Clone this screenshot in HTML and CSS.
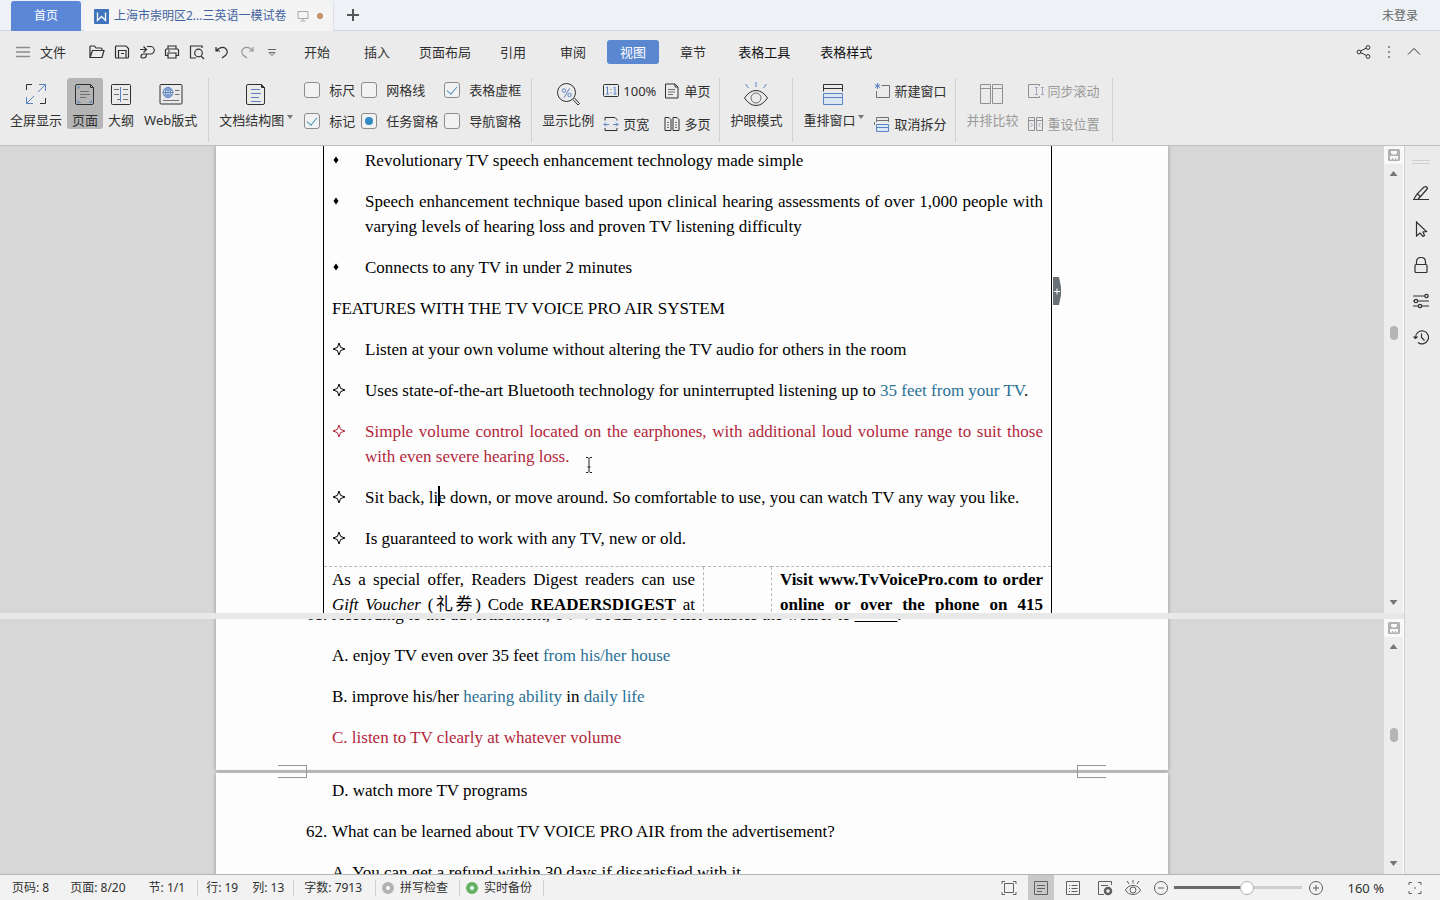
FILE: index.html
```html
<!DOCTYPE html>
<html lang="zh-CN">
<head>
<meta charset="utf-8">
<title>上海市崇明区2…三英语一模试卷</title>
<link rel="stylesheet" href="styles.css">
</head>
<body>
<svg class="defs" aria-hidden="true">
  <symbol id="star" viewBox="0 0 14 14"><path d="M7 1 L8.6 5.4 L13 7 L8.6 8.6 L7 13 L5.4 8.6 L1 7 L5.4 5.4 Z"/></symbol>
  <symbol id="diamond" viewBox="0 0 14 14"><path d="M4 2.500 L6.500 6 L4 9.500 L1.500 6 Z"/></symbol>
  <symbol id="split" viewBox="0 0 12 12"><path fill="#b0b0b0" stroke="none" fill-rule="evenodd" d="M1.500 0h9q1.500 0 1.500 1.500v9q0 1.500-1.500 1.500h-9Q0 12 0 10.500v-9Q0 0 1.500 0zM3 2v1.500q0 2 2 2h2q2 0 2-2V2zM2 7v3.500h2V9h1v1.500h2V9h1v1.500h2V7z"/></symbol>
</svg>

<header class="titlebar">
  <button class="home-tab">首页</button>
  <div class="doc-tab">
    <svg class="logo" viewBox="0 0 15 15" width="15" height="15"><rect width="15" height="15" rx="1" fill="#3f74bd" stroke="none"/><path d="M3.500 3.500v8l4-4 4 4v-8" fill="none" stroke="#fff" stroke-width="1.300"/></svg>
    <span class="doc-name">上海市崇明区2...三英语一模试卷</span>
    <svg class="screen" viewBox="0 0 12 12" width="12" height="12"><path d="M1 1.500h10v7H1zM6 8.500v2M3.500 11h5"/></svg>
    <i class="dot"></i>
  </div>
  <button class="new-tab" aria-label="新建标签"><svg viewBox="0 0 12 12" width="12" height="12"><path d="M6 0v12M0 6h12"/></svg></button>
  <button class="login">未登录</button>
</header>

<nav class="menubar">
  <button class="file"><svg viewBox="0 0 14 12" width="14" height="12"><path d="M0 1.500h14M0 6h14M0 10.500h14" stroke="#8c8c8c" stroke-width="1.400"/></svg>文件</button>
  <div class="quick">
    <button aria-label="打开"><svg viewBox="0 0 16 16"><path d="M1 13V3q0-1 1-1h3.500l1.500 2h5q1 0 1 1v1.500M1 13.500l2.500-7H15l-2 7z"/></svg></button>
    <button aria-label="保存"><svg viewBox="0 0 16 16"><path d="M1.500 3q0-1 1-1H12l2.500 2.500V13q0 1-1 1h-11q-1 0-1-1zM5 2h6M4.500 14V6.500h7.500V14M7 9.500h3"/></svg></button>
    <button aria-label="输出"><svg viewBox="0 0 16 16"><path d="M1 5.500h6M4.500 2.500l3 3-3 3M8 2.500h3.500a3.700 3.700 0 0 1 0 7.500H7.500q0 4-3 4T2 12t2.500-2H8"/></svg></button>
    <button aria-label="打印"><svg viewBox="0 0 16 16"><path d="M4 5V2h8v3M4 11.500H1.500V6q0-1 1-1h11q1 0 1 1v5.500H12M4 9h8v5H4zM4 7h2"/></svg></button>
    <button aria-label="打印预览"><svg viewBox="0 0 16 16"><path d="M7 14H1.500V2H13v2M12 12l3 3"/><circle cx="9.500" cy="9" r="3.800"/></svg></button>
    <button aria-label="撤销"><svg viewBox="0 0 16 16"><path d="M2 3v4h4M2 7q5-5 9-3 4 3 1 7l-4 3"/></svg></button>
    <button class="faded" aria-label="恢复"><svg viewBox="0 0 16 16"><path d="M14 3v4h-4M14 7q-4-5-9-3-4 3-1 7l4 3"/></svg></button>
    <button aria-label="更多"><svg class="thin" viewBox="0 0 16 16"><path d="M4 5.500h8M5 8.500h6l-3 3z"/></svg></button>
  </div>
  <div class="tabs">
    <button>开始</button><button>插入</button><button class="wide">页面布局</button><button>引用</button><button>审阅</button><button class="active">视图</button><button>章节</button><button class="ctx">表格工具</button><button class="ctx">表格样式</button>
  </div>
  <div class="menu-right">
    <button aria-label="分享"><svg viewBox="0 0 16 16"><path d="M4.500 7l6-3M4.500 8.500l6 3"/><circle cx="3" cy="8" r="1.900"/><circle cx="12" cy="3.500" r="1.900"/><circle cx="12" cy="12.500" r="1.900"/></svg></button>
    <button aria-label="菜单"><svg viewBox="0 0 16 16"><path d="M8 2v2M8 7v2M8 12v2"/></svg></button>
    <button aria-label="收起"><svg viewBox="0 0 16 16"><path d="M2 10.500l6-6 6 6"/></svg></button>
  </div>
</nav>

<section class="ribbon">
  <div class="group">
    <button class="big"><svg viewBox="0 0 24 24"><path d="M2.500 8V2.500H8M21.500 16v5.500H16"/><path class="b" d="M14 10l7.500-7.500M15 2.500h6.500V9M10 14l-7.500 7.500M2.500 15v6.500H9"/></svg><span>全屏显示</span></button>
    <button class="big pressed"><svg viewBox="0 0 24 24"><path d="M4 2.500h13.500l3 3V21q0 1.500-1.500 1.500H4q-1.500 0-1.500-1.500V4Q2.500 2.500 4 2.500zM17.500 2.500v3h3"/><path class="g" d="M7 9.500h9M7 12.500h10M7 15.500h6"/><path class="b" d="M5 7V5H7M5 18v2.500H7.500M18.500 18v2.500H16"/></svg><span>页面</span></button>
    <button class="big"><svg viewBox="0 0 24 24"><rect x="2.500" y="2.500" width="19" height="20" rx="1"/><path class="g" d="M5 7.500h5M5 12.500h5M8 17.500h3M14 7.500h5M14 12.500h5M14 17.500h5"/><path class="b" d="M11.500 5v15"/></svg><span>大纲</span></button>
    <button class="big"><svg viewBox="0 0 24 24"><rect x="1" y="2.500" width="22" height="19.500" rx="1"/><circle class="b" cx="9" cy="10.500" r="5"/><path class="b" d="M4 10.500h10M9 5.500v10M5 8h8M5 13h8"/><ellipse class="b" cx="9" cy="10.500" rx="2.500" ry="5"/><path class="g" d="M16 8.500h4.500M16 12.500h4.500M4 18.500h16"/></svg><span>Web版式</span></button>
  </div>
  <div class="group checks-group">
    <button class="big drop"><svg viewBox="0 0 24 24"><path d="M4 2.500h13.500l3 3V21q0 1.500-1.500 1.500H4q-1.500 0-1.500-1.500V4Q2.500 2.500 4 2.500z"/><path d="M17.500 2.500v3h3z" fill="#3c3c3c"/><path class="b" d="M7 7.500h9M7 11.500h10M7 15.500h8M7 19.500h10"/></svg><span>文档结构图</span></button>
    <div class="checks">
      <label><input type="checkbox">标尺</label>
      <label><input type="checkbox">网格线</label>
      <label><input type="checkbox" checked>表格虚框</label>
      <label><input type="checkbox" checked>标记</label>
      <label><input type="checkbox" class="partial">任务窗格</label>
      <label><input type="checkbox">导航窗格</label>
    </div>
  </div>
  <div class="group">
    <button class="big"><svg viewBox="0 0 24 24"><circle cx="10.500" cy="10.500" r="9"/><path d="M17 17.500l5 5.500 1.500-1.500-5-5.500"/><circle class="b" cx="8" cy="8.500" r="1.700"/><circle class="b" cx="13.500" cy="13" r="1.700"/><path class="b" d="M13.500 6.500l-5.500 9"/></svg><span>显示比例</span></button>
    <div class="pairs two">
      <button class="small"><svg viewBox="0 0 16 16"><rect x=".5" y="1.500" width="15" height="12" rx="1"/><path class="b" d="M3 5l1.500-1v7M3 11h3M10.500 5l1.500-1v7M10.500 11h3M8 6v1M8 9v1"/></svg>100%</button>
      <button class="small"><svg viewBox="0 0 16 16"><path d="M1.500 1h9.500l3 3v11H1.500zM11 1v3h3"/><path class="g" d="M4 6.500h7M4 9h7M4 11.500h5"/></svg>单页</button>
      <button class="small"><svg viewBox="0 0 16 16"><path d="M2 4.500V1.500h10l2 2v1M2 12v2.500h12V12"/><path class="b" d="M6 8.500H1M3 6.500l-2 2 2 2M10 8.500h5M13 6.500l2 2-2 2"/></svg>页宽</button>
      <button class="small"><svg viewBox="0 0 16 16"><path d="M1 1.500h4l2 2v11H1zM9 1.500h4l2 2v11H9z"/><path class="g" d="M3 6.500h2M3 9h2M3 11.500h2M11 6.500h2M11 9h2M11 11.500h2"/></svg>多页</button>
    </div>
  </div>
  <div class="group">
    <button class="big"><svg viewBox="0 0 24 24"><path d="M0.500 16q5-7.500 11.500-7.500T23.500 16q-5 7.500-11.500 7.500T.5 16z"/><circle class="g" cx="12" cy="16" r="5"/><path class="b" d="M12 0v5M1.500 2l3 4M22.500 2l-3 4"/></svg><span>护眼模式</span></button>
  </div>
  <div class="group">
    <button class="big drop"><svg viewBox="0 0 24 24"><path d="M2.500 9.500V2.500h19v7M2.500 6.500h19"/><path class="b f" d="M2.500 11.500h19v11h-19zM2.500 15.500h19"/></svg><span>重排窗口</span></button>
    <div class="pairs">
      <button class="small"><svg viewBox="0 0 16 16"><path class="g" d="M7.500 2.500h8v12h-13V8"/><path class="b" d="M3.500 0v6M1 1.500l5 3M6 1.500l-5 3"/></svg>新建窗口</button>
      <button class="small"><svg viewBox="0 0 16 16"><path class="g" d="M2.500 6V1.500h12V6M2.500 4.500h12M.5 6v3"/><path class="b f" d="M2.500 8.500h12v7h-12zM2.500 11.500h12"/></svg>取消拆分</button>
    </div>
  </div>
  <div class="group off">
    <button class="big" disabled><svg viewBox="0 0 24 24"><path d="M.5 2.500h10v19h-10zM12.500 2.500h10v19h-10zM.5 6.500h10M12.500 6.500h10"/></svg><span>并排比较</span></button>
    <div class="pairs">
      <button class="small" disabled><svg viewBox="0 0 16 16"><path d="M11.500 3V1.500H.5v13h11V13"/><path class="b" d="M7 4.500h3M7 11.500h3M8.500 4.500v7M13 4.500h3M13 11.500h3M14.500 4.500v7"/></svg>同步滚动</button>
      <button class="small" disabled><svg viewBox="0 0 16 16"><path d="M.5 1.500h6v13h-6zM8.500 1.500h6v13h-6zM.5 4.500h6M8.500 4.500h6"/><path class="b" d="M2.500 7l2 2-2 2M12.500 7l-2 2 2 2"/></svg>重设位置</button>
    </div>
  </div>
</section>

<main class="workspace">
  <div class="panes">
    <section class="pane pane-top">
      <div class="desk">
        <article class="page page-table">
          <table>
            <colgroup><col class="col-a"><col class="col-b"><col></colgroup>
            <tbody>
            <tr><td colspan="3" class="main-cell">
              <ul>
                <li><svg class="mark solid"><use href="#diamond"/></svg>Revolutionary TV speech enhancement technology made simple</li>
                <li><svg class="mark solid"><use href="#diamond"/></svg>Speech enhancement technique based upon clinical hearing assessments of over 1,000 people with varying levels of hearing loss and proven TV listening difficulty</li>
                <li><svg class="mark solid"><use href="#diamond"/></svg>Connects to any TV in under 2 minutes</li>
              </ul>
              <p>FEATURES WITH THE TV VOICE PRO AIR SYSTEM</p>
              <ul>
                <li><svg class="mark"><use href="#star"/></svg>Listen at your own volume without altering the TV audio for others in the room</li>
                <li><svg class="mark"><use href="#star"/></svg>Uses state-of-the-art Bluetooth technology for uninterrupted listening up to <span class="blue">35 feet from your TV</span>.</li>
                <li class="red"><svg class="mark"><use href="#star"/></svg>Simple volume control located on the earphones, with additional loud volume range to suit those with even severe hearing loss.</li>
                <li><svg class="mark"><use href="#star"/></svg>Sit back, li<i class="caret"></i>e down, or move around. So comfortable to use, you can watch TV any way you like.</li>
                <li><svg class="mark"><use href="#star"/></svg>Is guaranteed to work with any TV, new or old.</li>
              </ul>
            </td></tr>
            <tr class="offer">
              <td>As a special offer, Readers Digest readers can use<br><em>Gift Voucher</em> (礼券) Code <b>READERSDIGEST</b> at</td>
              <td></td>
              <td><b>Visit www.TvVoicePro.com to order<br>online or over the phone on 415</b></td>
            </tr>
            </tbody>
          </table>
          <button class="add-col" aria-label="添加列"><svg viewBox="0 0 8 28" width="8" height="28"><path d="M0 0h6l2 10v8l-2 10H0z" fill="#687078" stroke="none"/><path d="M1 14.500h6M4 11.500v6" stroke="#fff"/></svg></button>
          <svg class="ibeam" viewBox="0 0 8 16" width="8" height="16"><path d="M1 .5h2l1 1 1-1h2M1 15.500h2l1-1 1 1h2M4 1.500v13M2.500 10h3"/></svg>
        </article>
      </div>
      <div class="scroll">
        <button class="split" aria-label="拆分"><svg viewBox="0 0 12 12" width="12" height="12"><use href="#split"/></svg></button>
        <button class="up" aria-label="向上"></button>
        <div class="track"><i class="thumb"></i></div>
        <button class="down" aria-label="向下"></button>
      </div>
    </section>
    <div class="splitter"></div>
    <section class="pane pane-bottom">
      <div class="desk">
        <article class="page page-end">
          <p class="q"><span class="num">61.</span>According to the advertisement, TV VOICE PRO AIR enables the wearer to _____.</p>
          <p>A. enjoy TV even over 35 feet <span class="blue">from his/her house</span></p>
          <p>B. improve his/her <span class="blue">hearing ability</span> in <span class="blue">daily life</span></p>
          <p class="red">C. listen to TV clearly at whatever volume</p>
          <i class="corner left"></i><i class="corner right"></i>
        </article>
        <article class="page page-next">
          <p>D. watch more TV programs</p>
          <p class="q"><span class="num">62.</span>What can be learned about TV VOICE PRO AIR from the advertisement?</p>
          <p>A. You can get a refund within 30 days if dissatisfied with it.</p>
        </article>
      </div>
      <div class="scroll">
        <button class="split" aria-label="拆分"><svg viewBox="0 0 12 12" width="12" height="12"><use href="#split"/></svg></button>
        <button class="up" aria-label="向上"></button>
        <div class="track"><i class="thumb"></i></div>
        <button class="down" aria-label="向下"></button>
      </div>
    </section>
  </div>
  <aside class="side">
    <i class="grip"></i>
    <button aria-label="样式"><svg viewBox="0 0 16 16"><path d="M0 14.500h16M1 14l3-5 7-7q3-1 3.500 1.500L8 11l-3 3M4.500 9L8 12"/></svg></button>
    <button aria-label="选择"><svg viewBox="0 0 16 16"><path d="M3.500 1v14l3.500-3 3 3.500 1.500-1L10 11l3.500-.5z"/></svg></button>
    <button aria-label="限制"><svg viewBox="0 0 16 16"><rect x="2" y="7.500" width="12" height="8" rx="1"/><path d="M3.500 7.500V5q0-4.500 4.500-4.500T12.500 5v2.500"/></svg></button>
    <button aria-label="属性"><svg viewBox="0 0 16 16"><path d="M0 3h12M0 8h1M5 8h11M0 13h5M9 13h7"/><circle cx="13.500" cy="3" r="1.700"/><circle cx="3" cy="8" r="1.700"/><circle cx="7" cy="13" r="1.700"/></svg></button>
    <button aria-label="历史"><svg viewBox="0 0 16 16"><path d="M2.500 8.500A6.500 6.500 0 1 1 5 13.500M.5 7.500l2 2 2-2M8.500 4.500v4l3 3"/></svg></button>
  </aside>
</main>

<footer class="status">
  <span>页码: 8</span><span class="s-view">页面: 8/20</span><span class="s-sec">节: 1/1</span>
  <span class="s-line">行: 19</span><span class="s-col">列: 13</span>
  <span class="s-words">字数: 7913</span>
  <button class="s-check"><i class="ring"></i>拼写检查</button>
  <button class="s-check"><i class="ring green"></i>实时备份</button>
  <div class="s-right">
    <button aria-label="全屏"><svg viewBox="0 0 16 16"><path d="M3.500 3.500h9v9h-9zM1 4V1.500h3M12 1.500h3V4M15 12v2.500h-3M4 14.500H1V12"/></svg></button>
    <button class="on" aria-label="页面视图"><svg viewBox="0 0 16 16"><path d="M1.500 1.500h13v13h-13zM4 5.500h8M4 8.500h8M4 11.500h5"/></svg></button>
    <button aria-label="大纲视图"><svg viewBox="0 0 16 16"><path d="M1.500 1.500h13v13h-13zM6.500 5.500h6M6.500 8.500h6M6.500 11.500h6M4 5.500h1M4 8.500h1M4 11.500h1"/></svg></button>
    <button aria-label="网页视图"><svg viewBox="0 0 16 16"><path d="M7 14.500H1.500v-13h13V5M4 5.500h7"/><circle cx="11" cy="11" r="3" stroke-width="2.500"/></svg></button>
    <button class="eye" aria-label="护眼"><svg viewBox="0 0 16 16"><path d="M.5 10Q3 5.500 8 5.500T15.500 10Q13 14.500 8 14.500T.5 10z"/><circle cx="8" cy="10" r="3"/><path d="M8 0v3.500M2 1l2 3M14 1l-2 3"/></svg></button>
    <button class="minus" aria-label="缩小"><svg viewBox="0 0 16 16"><circle cx="8" cy="8" r="6.500"/><path d="M5 8h6"/></svg></button>
    <input class="zoom" type="range" min="0" max="100" value="58" aria-label="显示比例">
    <button class="plus" aria-label="放大"><svg viewBox="0 0 16 16"><circle cx="8" cy="8" r="6.500"/><path d="M5 8h6M8 5v6"/></svg></button>
    <span class="pct">160 %</span>
    <button aria-label="适合窗口"><svg viewBox="0 0 16 16"><path d="M5 2.500H2V5M11 2.500h3V5M14 11v2.500h-3M5 13.500H2V11M7 8h2"/></svg></button>
  </div>
</footer>
</body>
</html>
```
FILE: styles.css
```css
* { box-sizing: border-box; }
body {
  margin: 0;
  height: 100vh;
  display: flex;
  flex-direction: column;
  overflow: hidden;
  background: #ebebeb;
  color: #303030;
  font: 13px/20px "Noto Sans", "Noto Sans CJK SC", sans-serif;
}
button {
  border: 0;
  padding: 0;
  background: none;
  font: inherit;
  color: inherit;
  white-space: nowrap;
}
svg { display: block; fill: none; stroke: #303030; stroke-width: 1; }
.defs { position: absolute; width: 0; height: 0; }

/* title bar */
.titlebar {
  flex: none;
  height: 31px;
  display: flex;
  align-items: flex-start;
  padding-left: 11px;
  background: #eef2f6;
  border-bottom: 1px solid #ccdae6;
}
.home-tab {
  width: 70px;
  height: 30px;
  margin-top: 1px;
  border-radius: 3px 3px 0 0;
  background: #5b87d6;
  color: #fff;
  font-size: 12px;
}
.doc-tab {
  height: 30px;
  margin: 1px 0 0 3px;
  padding: 0 10px;
  display: flex;
  align-items: center;
  border-right: 1px solid #dde1e5;
  border-radius: 3px 3px 0 0;
  background: #f4f4f5;
  color: #3f639c;
  font-size: 12px;
}
.doc-name { margin: 0 10px 0 5px; }
.screen { stroke: #aaa; }
.dot { width: 6px; height: 6px; margin-left: 8px; border-radius: 50%; background: #c98e62; }
.new-tab { height: 30px; margin-left: 13px; }
.new-tab svg { stroke: #555; stroke-width: 2; }
.login { height: 31px; margin: 0 22px 0 auto; font-size: 12px; color: #666; }

/* menu bar */
.menubar { flex: none; height: 42px; display: flex; align-items: center; padding-left: 16px; }
.file { display: flex; align-items: center; gap: 10px; }
.quick { display: flex; gap: 9px; margin-left: 23px; }
.quick svg, .menu-right svg { width: 16px; height: 16px; }
.quick svg { stroke-width: 1.2; }
.quick .thin { stroke: #666; stroke-width: 1; }
.faded { opacity: .45; }
.tabs { display: flex; gap: 8px; margin-left: 11px; }
.tabs button { height: 24px; padding: 0 13px; border-radius: 3px; }
.tabs .wide { padding: 0 8px; }
.tabs .ctx { padding: 0 11px; color: #111; }
.tabs .active { background: #5b87d0; color: #fff; }
.menu-right { display: flex; gap: 9px; margin: 0 18px 0 auto; }

/* ribbon */
.ribbon { flex: none; height: 73px; display: flex; padding: 5px 0 3px; border-bottom: 1px solid #bfbfbf; }
.group { display: flex; align-items: flex-start; padding: 0 6px 0 5px; border-right: 1px solid #d2d2d2; }
.group + .group { padding-right: 5px; }
.big {
  height: 51px;
  padding: 4px 5px 0;
  display: flex;
  flex-direction: column;
  align-items: center;
  gap: 5px;
  border-radius: 3px;
}
.big svg { width: 24px; height: 24px; }
.big span { line-height: 18px; }
.pressed { background: #b5b5b5; }
.ribbon .b { stroke: #5b83c4; }
.ribbon .g { stroke: #707070; }
.ribbon .f { fill: #dce7f6; }
.drop { position: relative; padding-right: 15px; }
.drop svg { margin-left: 8px; }
.drop::after {
  content: "";
  position: absolute;
  right: 6px;
  bottom: 10px;
  border: 3px solid transparent;
  border-top: 4px solid #777;
  border-bottom: 0;
}
.group.checks-group { padding-right: 10px; }
.checks { display: grid; grid-template-columns: auto auto auto; gap: 11px 6px; margin: 2px 0 0 5px; }
.checks label { display: flex; align-items: center; gap: 9px; }
.checks input {
  appearance: none;
  width: 16px;
  height: 16px;
  margin: 0;
  display: grid;
  place-items: center;
  border: 1px solid #8c8c8c;
  border-radius: 3px;
  background: #f2f2f2;
}
.checks input:checked::before {
  content: "";
  width: 5px;
  height: 9px;
  margin-bottom: 3px;
  border: solid #4f97c2;
  border-width: 0 1px 1px 0;
  transform: rotate(40deg);
}
.checks .partial::before { content: ""; width: 8px; height: 8px; border-radius: 50%; background: #318cc4; }
.pairs { display: grid; gap: 13px 8px; padding: 3px 4px 0; }
.pairs.two { grid-template-columns: auto auto; }
.small { display: flex; align-items: center; gap: 4px; }
.small svg { width: 16px; height: 16px; }
.off { color: #9a9a9a; }
.off .pairs { padding-right: 7px; }
.off svg { stroke: #909090; }
.off .b { stroke: #a0a8c4; }

/* workspace */
.workspace { flex: 1; min-height: 0; display: flex; }
.panes { flex: 1; min-width: 0; display: flex; flex-direction: column; }
.pane { display: flex; min-height: 0; overflow: hidden; }
.pane-top { flex: 467 1 0; }
.pane-bottom { flex: 255 1 0; }
.splitter { flex: none; height: 6px; background: #e8e8e8; }
.desk { flex: 1; min-width: 0; overflow: hidden; background: #d7d7d7; }
.page {
  position: relative;
  width: 952px;
  margin: 0 auto;
  background: #fdfdfd;
  box-shadow: 0 0 4px #909090;
  color: #000;
  font: 17px/25px "Liberation Serif", "Noto Sans CJK SC", serif;
}
.page p { margin: 0 0 16px; }
.page-table { padding: 0 116px 0 107px; min-height: 100%; }
table { width: 100%; border-collapse: collapse; table-layout: fixed; }
.col-a { width: 380px; }
.col-b { width: 68px; }
td { padding: 0 8px; vertical-align: top; border: 1px dashed #b8b8b8; text-align: justify; }
tr td:first-child { border-left: 1px solid #000; }
tr td:last-child { border-right: 1px solid #000; }
tr:first-child td { border-top: 0; }
.main-cell { padding-top: 2px; }
.main-cell ul { margin: 0; padding: 0; list-style: none; }
.main-cell li { position: relative; padding-left: 33px; margin-bottom: 16px; }
.main-cell ul:last-child li:last-child { margin-bottom: 15px; }
.mark { position: absolute; left: 0; top: 5px; width: 14px; height: 14px; stroke: currentColor; }
.solid { top: 6px; fill: currentColor; stroke: none; }
.caret { position: absolute; width: 2px; height: 20px; margin-top: 1px; background: #000; }
.ibeam { position: absolute; left: 369px; top: 311px; stroke: #222; }
.add-col { position: absolute; left: 837px; top: 131px; }
.offer td { text-align-last: justify; border-bottom: 0; }
.red { color: #b3273a; }
.blue { color: #2b7196; }

.page-end { margin-top: -17px; padding: 0 116px 4px; }
.page-next { margin-top: 3px; padding: 5px 116px; }
.q .num { display: inline-block; width: 26px; }
.page .q { margin-left: -26px; }
.corner { position: absolute; z-index: 1; bottom: -8px; width: 29px; height: 13px; border: 1px solid #999; }
.corner.left { left: 62px; border-left: 0; }
.corner.right { right: 62px; border-right: 0; }

.scroll {
  flex: none;
  width: 20px;
  display: flex;
  flex-direction: column;
  align-items: center;
  background: #ededed;
  border-right: 1px solid #fff;
}
.split { width: 19px; height: 18px; display: grid; place-items: center; background: #f8f8f8; }
.up, .down { width: 8px; height: 5px; background: #777; }
.up { margin-top: 7px; clip-path: polygon(50% 0, 100% 100%, 0 100%); }
.down { margin-bottom: 8px; clip-path: polygon(0 0, 100% 0, 50% 100%); }
.track { flex: 1; display: flex; padding-left: 1px; }
.thumb { width: 8px; height: 14px; border-radius: 4px; background: #b5b5b5; }
.pane-top .thumb { margin-top: 150px; }
.pane-bottom .thumb { margin-top: 79px; }

.side {
  flex: none;
  width: 36px;
  display: flex;
  flex-direction: column;
  align-items: center;
  gap: 20px;
  padding: 14px 3px 0 0;
  border-left: 1px solid #cfcfcf;
}
.side svg { width: 16px; height: 16px; stroke-width: 1.2; }
.grip { width: 18px; height: 4px; margin-bottom: 1px; border: solid #cfcfcf; border-width: 1px 0; }

/* status bar */
.status {
  flex: none;
  height: 26px;
  display: flex;
  align-items: center;
  padding-left: 12px;
  border-top: 1px solid #b5b5b5;
  background: #f2f2f2;
  font-size: 12px;
  line-height: 16px;
}
.status > span { white-space: nowrap; }
.s-view { margin-left: 21px; }
.s-sec { margin-left: 23px; padding-right: 12px; }
.s-line { padding-left: 8px; }
.s-col { margin-left: 14px; padding-right: 9px; }
.s-words { padding: 0 13px 0 10px; }
.s-sec, .s-col, .s-words, .s-check { border-right: 1px solid #d0d0d0; }
.s-check { display: flex; align-items: center; gap: 6px; padding: 0 11px 0 6px; }
.ring { width: 12px; height: 12px; border: 4px solid #b2b2b2; border-radius: 50%; background: #fff; }
.green { border-color: #63b161; }
.s-right { display: flex; align-items: center; height: 100%; margin: 0 17px 0 auto; }
.s-right svg { width: 16px; height: 16px; margin: auto; stroke: #606060; }
.s-right button { width: 26px; height: 100%; margin-right: 6px; }
.s-right .on { background: #c9c9c9; }
.s-right .eye, .s-right .minus { width: 16px; margin-right: 12px; }
.s-right .eye { margin-left: 1px; }
.s-right .minus { margin-right: 5px; }
.s-right .plus { width: 16px; margin: 0 24px 0 6px; }
.s-right button:last-child { width: 16px; margin: 0 0 0 23px; }
.pct { font-size: 13px; white-space: nowrap; }
.zoom {
  appearance: none;
  width: 128px;
  height: 14px;
  margin: 0;
  background: linear-gradient(90deg, #6b6b6b 57%, #cfcfcf 57%) center / 100% 3px no-repeat;
}
.zoom::-webkit-slider-thumb {
  appearance: none;
  width: 14px;
  height: 14px;
  border: 1px solid #b0b0b0;
  border-radius: 50%;
  background: #fff;
}
```
